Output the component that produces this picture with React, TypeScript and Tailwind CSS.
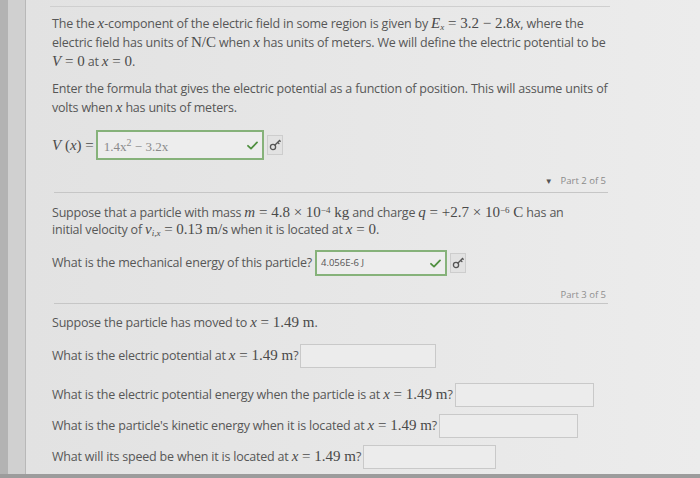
import React from 'react';

const sans = { fontFamily: '"Open Sans", "Liberation Sans", sans-serif' };

const M: React.FC<{ children: React.ReactNode }> = ({ children }) => (
  <span className="font-['Liberation_Serif',serif] text-[15px] leading-none text-[#4a4a4a] tracking-normal">
    {children}
  </span>
);

const I: React.FC<{ children: React.ReactNode }> = ({ children }) => <i>{children}</i>;

const KeyIcon = () => (
  <svg width="12" height="12" viewBox="0 0 12 12" fill="none" stroke="#555" strokeWidth="1.3" strokeLinecap="round">
    <circle cx="4" cy="8" r="2.6" />
    <path d="M6 6 L10.5 1.5 M8.6 3.4 L9.9 4.6 M10.5 1.5 L11.2 2.3" />
  </svg>
);

const Check = () => (
  <svg width="11" height="9" viewBox="0 0 11 9" fill="none" stroke="#4f8f3f" strokeWidth="1.8" strokeLinecap="round" strokeLinejoin="round">
    <path d="M1 4.8 L4 7.6 L10 1.4" />
  </svg>
);

const KeyButton = () => (
  <div className="w-[16px] h-[20px] ml-[3px] border border-[#cdcdcd] bg-[#e2e2e2] flex items-center justify-center">
    <KeyIcon />
  </div>
);

const Blank: React.FC<{ cls: string }> = ({ cls }) => (
  <div className={`${cls} h-[24px] ml-[2px] border border-[#c9c9c9] bg-[#ececec]`} />
);

const Rule = () => <div className="border-t border-[#c6c6c6] w-[554px] ml-[2px]" />;

export default function App() {
  return (
    <div className="w-[700px] h-[478px] overflow-hidden bg-[#9c9c9c]">
      <div className="flex h-[474px]">
        <div className="w-[8px] bg-[#b3b3b3]" />
        <div className="w-[18px] bg-[#d0d0d0] border-r border-[#b8b8b8]" />
        <div
          className="flex-1 bg-gradient-to-r from-[#e2e2e2] to-[#ececec] pl-[26px] text-[12.5px] text-[#575757] tracking-[-0.2px]"
          style={sans}
        >
          <div className="mt-[6px] border-t border-[#cfcfcf] w-[560px] -ml-[2px]" />

          <p className="mt-[7px] leading-[19px] w-[558px]">
            The the <M><I>x</I></M>-component of the electric field in some region is given by{' '}
            <M><I>E</I><sub className="text-[9px]"><I>x</I></sub> = 3.2 − 2.8<I>x</I></M>, where the
            <br />
            electric field has units of <M>N/C</M> when <M><I>x</I></M> has units of meters. We will define the electric
            potential to be
            <br />
            <M><I>V</I> = 0</M> at <M><I>x</I> = 0</M>.
          </p>

          <p className="mt-[9px] leading-[18.5px] w-[558px]">
            Enter the formula that gives the electric potential as a function of position. This will assume units of
            <br />
            volts when <M><I>x</I></M> has units of meters.
          </p>

          <div className="mt-[13px] h-[30px] flex items-center">
            <M>
              <I>V</I> (<I>x</I>) =
            </M>
            <div className="ml-[2px] w-[168px] h-[30px] border-2 border-[#86b27a] bg-[#ededed] flex items-center pl-[6px] pr-[4px]">
              <span className="font-['Liberation_Serif',serif] text-[13px] text-[#8a8a8a] tracking-normal flex-1 pt-[3px]">
                1.4x<sup className="text-[10px]">2</sup> − 3.2x
              </span>
              <Check />
            </div>
            <KeyButton />
          </div>

          <div className="mt-[14px] h-[14px] flex items-center justify-end w-[554px] text-[9.5px] text-[#8a8a8a] tracking-normal">
            <span className="text-[8px] text-[#555] mr-[8px]">▼</span>
            Part 2 of 5
          </div>
          <div className="mt-[4px]">
            <Rule />
          </div>

          <p className="mt-[11px] leading-[17px] w-[558px]">
            Suppose that a particle with mass <M><I>m</I> = 4.8 × 10<sup className="text-[9px]">−4</sup> kg</M> and charge{' '}
            <M><I>q</I> = +2.7 × 10<sup className="text-[9px]">−6</sup> C</M> has an
            <br />
            initial velocity of <M><I>v</I><sub className="text-[9px]"><I>i</I>,<I>x</I></sub> = 0.13 m/s</M> when it is
            located at <M><I>x</I> = 0</M>.
          </p>

          <div className="mt-[12px] h-[26px] flex items-center">
            <span>What is the mechanical energy of this particle?</span>
            <div className="ml-[3px] w-[132px] h-[26px] border-2 border-[#86b27a] bg-[#ededed] flex items-center pl-[4px] pr-[4px]">
              <span className="flex-1 text-[9.5px] text-[#555] tracking-normal">4.056E-6 J</span>
              <Check />
            </div>
            <KeyButton />
          </div>

          <div className="mt-[12px] h-[14px] flex items-center justify-end w-[554px] text-[9.5px] text-[#8f8f8f] tracking-normal">
            Part 3 of 5
          </div>
          <div className="mt-[1px]">
            <Rule />
          </div>

          <p className="mt-[10px] leading-[18px]">
            Suppose the particle has moved to <M><I>x</I> = 1.49 m</M>.
          </p>

          <div className="mt-[12px] flex items-center h-[24px]">
            <span>
              What is the electric potential at <M><I>x</I> = 1.49 m</M>?
            </span>
            <Blank cls="w-[136px]" />
          </div>

          <div className="mt-[15px] flex items-center h-[24px]">
            <span>
              What is the electric potential energy when the particle is at <M><I>x</I> = 1.49 m</M>?
            </span>
            <Blank cls="w-[139px]" />
          </div>

          <div className="mt-[7px] flex items-center h-[24px]">
            <span>
              What is the particle's kinetic energy when it is located at <M><I>x</I> = 1.49 m</M>?
            </span>
            <Blank cls="w-[139px]" />
          </div>

          <div className="mt-[7px] flex items-center h-[24px]">
            <span>
              What will its speed be when it is located at <M><I>x</I> = 1.49 m</M>?
            </span>
            <Blank cls="w-[133px]" />
          </div>
        </div>
      </div>
    </div>
  );
}
